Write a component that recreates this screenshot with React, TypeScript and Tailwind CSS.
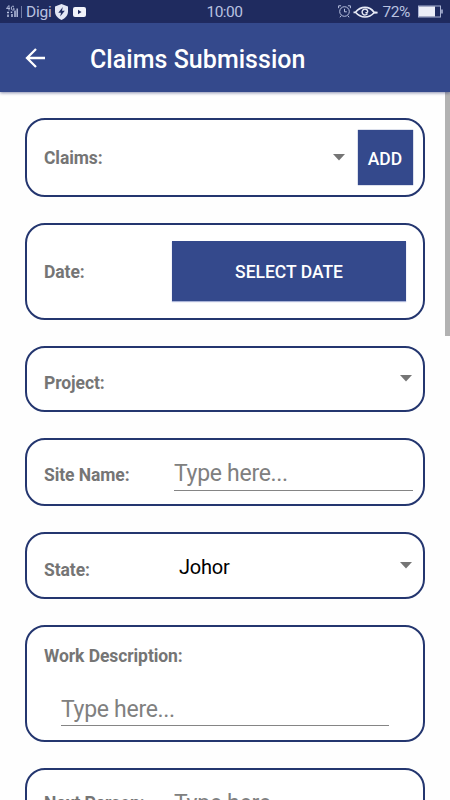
import type { ReactNode } from 'react';
import { clsx } from 'clsx';

type CardProps = {
  className?: string;
  children: ReactNode;
};

const Card = ({ className, children }: CardProps) => (
  <section className={clsx('flex shrink-0 rounded-[20px] border-2 border-[#24366f] bg-white', className)}>
    {children}
  </section>
);

const Label = ({ className, children }: CardProps) => (
  <span
    className={clsx(
      'shrink-0 text-[17.5px] leading-5 font-bold tracking-[-0.08px] whitespace-nowrap text-[#757575]',
      className
    )}
  >
    {children}
  </span>
);

const Caret = ({ className }: { className?: string }) => (
  <svg className={clsx('shrink-0', className)} width="12" height="7" viewBox="0 0 12 7" fill="#757575">
    <path d="M0 0h12L6 6.6z" />
  </svg>
);

const TextField = ({ className, label }: { className?: string; label: string }) => (
  <input
    type="text"
    aria-label={label}
    placeholder="Type here..."
    className={clsx(
      'min-w-0 border-b border-[#858585] bg-transparent p-0 text-[23px] leading-7 tracking-[-0.3px] outline-none placeholder:text-[#808080]',
      className
    )}
  />
);

const StatusBar = () => (
  <div className="flex h-[23px] shrink-0 items-center justify-between bg-[#1f2b5f] pr-[7px] pl-[6px] text-[#b9c2e0]">
    <div className="flex w-[130px] items-center">
      <svg width="18" height="14" viewBox="0 0 18 14" fill="none" stroke="currentColor">
        <path d="M2.8 0.5L0.5 3.5h3.5M3 0.5V5.5M8 1.3H6.2L5.4 2v2.3l.8.7H8V3.2H7" strokeWidth="0.9" />
        <path d="M1 7.5h2M2 9.5V12M5.5 6.5v1.5M6 9v3M9 5.5V12" strokeWidth="1.5" />
        <path d="M11.2 3.5V12" strokeWidth="1.4" />
        <path d="M15.5 1v12" strokeWidth="0.9" opacity="0.6" />
      </svg>
      <span className="ml-[2px] pt-[2px] text-[15.5px] leading-none tracking-[-0.2px]">Digi</span>
      <svg className="ml-[3px]" width="13" height="16" viewBox="0 0 13 16">
        <path d="M6.5 0L13 2.5v5c0 4-2.7 6.8-6.5 8.5C2.7 14.3 0 11.5 0 7.5v-5z" fill="#e3e7f4" />
        <path d="M7.8 3L3.3 8.7H6l-.8 3.8 4.6-5.7H7z" fill="#1f2b5f" />
      </svg>
      <svg className="ml-[5px]" width="13" height="10" viewBox="0 0 13 10">
        <rect width="13" height="10" rx="2" fill="#f1f3fa" />
        <path d="M5 2.8v4.4L8.5 5z" fill="#1f2b5f" />
      </svg>
    </div>
    <span className="pt-[2px] text-[15.5px] leading-none tracking-[-0.5px]">10:00</span>
    <div className="flex w-[130px] items-center justify-end">
      <svg width="13" height="13" viewBox="0 0 13 13" fill="none" stroke="currentColor">
        <circle cx="6.5" cy="6.5" r="4.8" />
        <path d="M6.5 3.8v3h2.3M.6 3.2V.8h2.5M12.4 3.2V.8H9.9M3 10.8l-1 1.5M10 10.8l1 1.5" />
      </svg>
      <svg className="ml-[2px]" width="25" height="12" viewBox="0 0 25 12" fill="none" stroke="#e8ebf6">
        <path
          d="M0.5 6.3h2C5 3 8.3 1.3 12 1.3c3.8 0 7 2 8.8 4.7l3.7.7-3.7.3C18.5 9.5 15.5 11 12 11 8 11 5 9.2 2.5 6.3"
          strokeWidth="1.7"
        />
        <path d="M14.5 7.5a2.9 2.9 0 1 1 .2-2.5c.2 1.2-1.2 2.2-2.3 1.5" strokeWidth="1.4" />
      </svg>
      <span className="ml-[4px] pt-[2px] text-[15.5px] leading-none tracking-[-0.4px]">72%</span>
      <svg className="ml-[8px]" width="25" height="13" viewBox="0 0 25 13" fill="none">
        <rect x="0.5" y="1" width="22" height="11" stroke="#aab3d3" />
        <rect x="1" y="1.5" width="16" height="10" fill="#eceef7" />
        <path d="M24 4.5v4" stroke="#aab3d3" strokeWidth="1.6" />
      </svg>
    </div>
  </div>
);

const Header = () => (
  <header className="z-10 flex h-[69px] shrink-0 items-center bg-[#34498c] pl-[25px] text-white shadow-[0_1px_3px_rgba(40,50,110,0.55)]">
    <button type="button" aria-label="Back">
      <svg width="21" height="20" viewBox="0 0 21 20" fill="none" stroke="currentColor" strokeWidth="2.3">
        <path d="M20 10H2.5M11 1L2 10l9 9" />
      </svg>
    </button>
    <h1 className="ml-[44px] pt-[4px] text-[25px] leading-8 font-medium tracking-[0.04px] whitespace-nowrap">
      Claims Submission
    </h1>
  </header>
);

export default function App() {
  return (
    <div className="flex h-[800px] w-[450px] flex-col overflow-hidden bg-[#fefefe] font-['Roboto',sans-serif]">
      <StatusBar />
      <Header />
      <main className="flex min-h-0 flex-1 items-start justify-between overflow-hidden pl-[25px]">
        <div className="flex w-[400px] flex-col gap-[26px] pt-[26px]">
          <Card className="h-[79px] items-center pr-[10.5px] pl-[17px]">
            <Label className="pt-px">Claims:</Label>
            <Caret className="ml-auto" />
            <button
              type="button"
              className="ml-[12.5px] h-[55px] w-[55px] bg-[#34498c] pt-[3px] text-[17.5px] font-medium text-white shadow-[0_0_1px_#34498c]"
            >
              ADD
            </button>
          </Card>

          <Card className="h-[97px] items-center pr-[17px] pl-[17px]">
            <Label className="pt-px">Date:</Label>
            <button
              type="button"
              className="mb-px ml-auto h-[60px] w-[234px] bg-[#34498c] pt-[3px] text-[17.5px] font-medium text-white shadow-[0_1px_1px_#aab4d8]"
            >
              SELECT DATE
            </button>
          </Card>

          <Card className="h-[66px] items-center justify-between pr-[11px] pl-[17px]">
            <Label className="pt-[8px]">Project:</Label>
            <Caret className="mb-px" />
          </Card>

          <Card className="h-[68px] items-center pr-[10px] pl-[17px]">
            <Label className="w-[130px] pt-[6px]">Site Name:</Label>
            <TextField label="Site Name" className="mt-[4px] h-[33px] w-[240px]" />
          </Card>

          <Card className="h-[67px] items-center pr-[11px] pl-[17px]">
            <Label className="w-[135px] pt-[9px]">State:</Label>
            <span className="pt-[2px] text-[20px] leading-6 tracking-[-0.2px] text-black">Johor</span>
            <Caret className="ml-auto" />
          </Card>

          <Card className="h-[117px] flex-col pt-[19px] pl-[17px]">
            <Label>Work Description:</Label>
            <TextField label="Work Description" className="mt-[27px] ml-[17px] h-[33px] w-[328px]" />
          </Card>

          <Card className="h-[68px] items-center pr-[10px] pl-[17px]">
            <Label className="w-[130px] pt-[2px]">Next Person:</Label>
            <TextField label="Next Person" className="mt-[3px] h-[33px] w-[240px]" />
          </Card>
        </div>
        <div className="h-[244px] w-[5px] bg-[#b2b2b2]" />
      </main>
    </div>
  );
}
